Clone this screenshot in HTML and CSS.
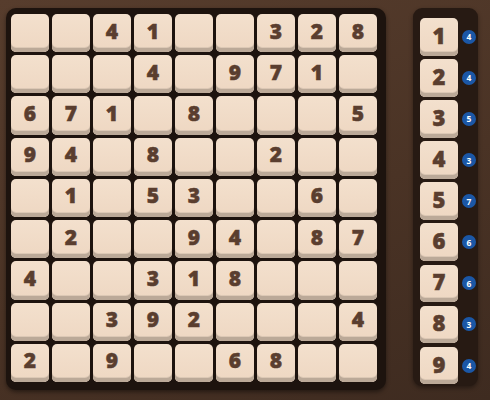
FILE: index.html
```html
<!DOCTYPE html>
<html lang="en">
<head>
    <meta charset="UTF-8">
    <meta name="viewport" content="width=device-width, initial-scale=1.0">
    <title>Sudoku</title>
    <link rel="stylesheet" href="styles.css">
</head>
<body>
    <div class="table">
        <div class="board" id="board">
            <!-- 81 cells are generated here -->
        </div>

        <div class="picker" id="picker">
            <!-- number keys with remaining counts -->
        </div>
    </div>

    <script>
        const puzzle = [
            '..41..328',
            '...4.971.',
            '671.8...5',
            '94.8..2..',
            '.1.53..6.',
            '.2..94.87',
            '4..318...',
            '..392...4',
            '2.9..68..'
        ];
        const remaining = [4, 4, 5, 3, 7, 6, 6, 3, 4];

        const board = document.getElementById('board');
        puzzle.forEach(row => {
            for (const ch of row) {
                const cell = document.createElement('div');
                cell.className = 'cell';
                if (ch !== '.') cell.textContent = ch;
                board.appendChild(cell);
            }
        });

        const picker = document.getElementById('picker');
        remaining.forEach((left, i) => {
            const row = document.createElement('div');
            row.className = 'pick-row';

            const key = document.createElement('div');
            key.className = 'key';
            key.textContent = i + 1;

            const badge = document.createElement('span');
            badge.className = 'badge';
            badge.textContent = left;

            row.appendChild(key);
            row.appendChild(badge);
            picker.appendChild(row);
        });
    </script>
</body>
</html>
```

FILE: styles.css
```css
* {
    margin: 0;
    padding: 0;
    box-sizing: border-box;
}

body {
    width: 490px;
    height: 400px;
    overflow: hidden;
    font-family: 'Open Sans', 'DejaVu Sans', sans-serif;
    background: #48322a;
}

.table {
    display: flex;
    align-items: flex-start;
    padding: 8px 0 0 6px;
    height: 100%;
    background: linear-gradient(160deg, #573d2d 0%, #4a3325 55%, #3e2b20 100%);
}

/* dark tray holding the 9x9 grid */
.board {
    width: 380px;
    height: 382px;
    padding: 6px 9px 8px 5px;
    background: #1d130e;
    border-radius: 10px;
    box-shadow: 0 2px 4px rgba(0, 0, 0, 0.45);
    display: grid;
    grid-template-columns: repeat(9, 38px);
    grid-template-rows: repeat(9, 1fr);
    column-gap: 3px;
    row-gap: 3px;
}

.cell,
.key {
    background: linear-gradient(180deg, #f3e0cd 0%, #eed7c2 100%);
    border-radius: 5px;
    box-shadow: inset 0 -4px 0 #bba998, inset 0 -5px 0 #dcc8b5;
    display: flex;
    align-items: center;
    justify-content: center;
    padding-bottom: 4px;
    color: #5a3e2f;
    font-size: 21px;
    font-weight: 800;
    -webkit-text-stroke: 0.5px #5a3e2f;
    line-height: 1;
}

/* number picker on the right */
.picker {
    margin-left: 27px;
    width: 65px;
    height: 378px;
    padding: 10px 0 0 7px;
    background: #271a13;
    border-radius: 9px;
    box-shadow: 0 2px 4px rgba(0, 0, 0, 0.4);
    display: flex;
    flex-direction: column;
    gap: 3.6px;
}

.pick-row {
    display: flex;
    align-items: center;
}

.key {
    width: 38px;
    height: 37.5px;
    font-size: 22px;
}

.badge {
    margin-left: 4px;
    width: 14px;
    height: 14px;
    border-radius: 50%;
    background: #1b57a6;
    color: #fff;
    font-size: 8.5px;
    font-weight: 700;
    display: flex;
    align-items: center;
    justify-content: center;
}
```
